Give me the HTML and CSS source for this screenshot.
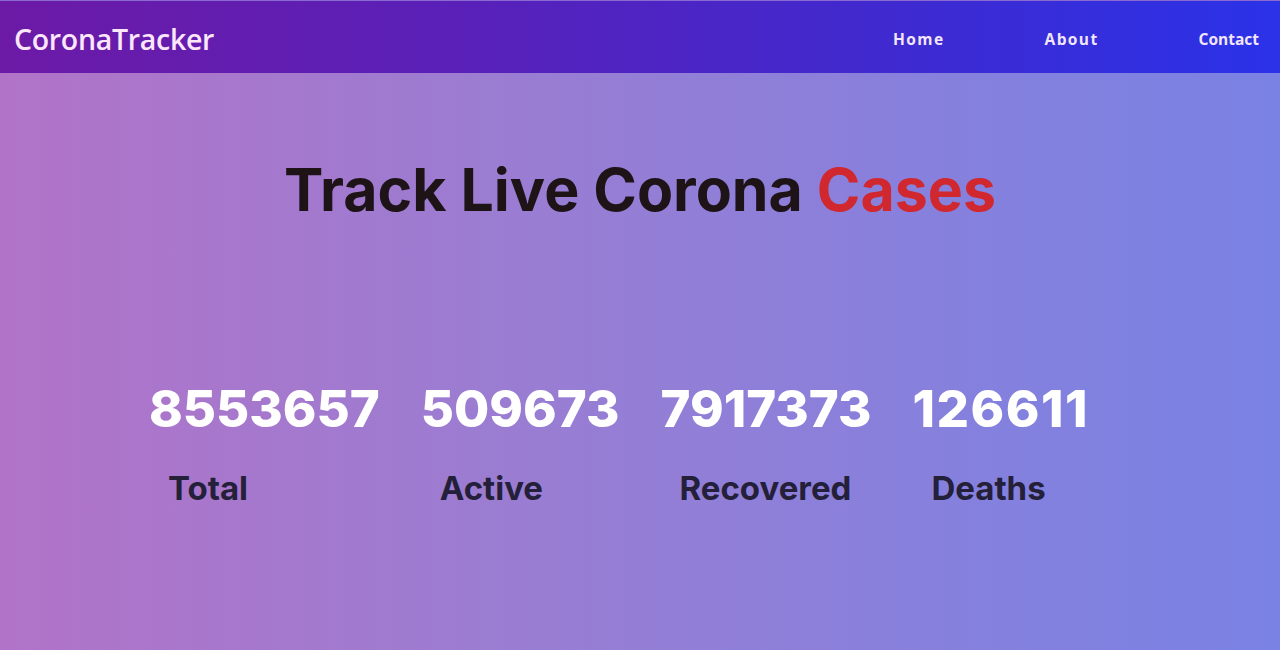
FILE: index.html
```html
<!DOCTYPE html>
<html lang="en">
<head>
<meta charset="utf-8">
<title>CoronaTracker</title>
<link rel="stylesheet" href="styles.css">
</head>
<body>
<header class="navbar">
  <div class="logo">CoronaTracker</div>
  <nav class="nav-links">
    <a class="nav-link spaced" href="#">Home</a>
    <a class="nav-link spaced" href="#">About</a>
    <a class="nav-link" href="#">Contact</a>
  </nav>
</header>
<main class="hero">
  <h1 class="title">Track Live Corona <span class="accent">Cases</span></h1>
  <section class="stats">
    <div class="stat">
      <div class="stat-num">8553657</div>
      <div class="stat-label">Total</div>
    </div>
    <div class="stat">
      <div class="stat-num">509673</div>
      <div class="stat-label">Active</div>
    </div>
    <div class="stat">
      <div class="stat-num">7917373</div>
      <div class="stat-label">Recovered</div>
    </div>
    <div class="stat">
      <div class="stat-num deaths-num">126611</div>
      <div class="stat-label">Deaths</div>
    </div>
  </section>
</main>
</body>
</html>
```
FILE: styles.css
```css
* { box-sizing: border-box; }
html, body { margin: 0; padding: 0; }
body {
  width: 1280px;
  height: 650px;
  overflow: hidden;
  font-family: Inter, "Liberation Sans", sans-serif;
  background: linear-gradient(90deg, #b173c8 0%, #9a7dd2 40%, #8880dc 70%, #7a82e3 100%);
}
.navbar {
  height: 73px;
  display: flex;
  align-items: center;
  justify-content: space-between;
  padding: 3px 21px 0 14px;
  background: linear-gradient(90deg, #6c1aa6 0%, #5a20b8 35%, #3f2ad0 70%, #2b32e8 100%);
  border-top: 1px solid #8a6ad0;
}
.logo {
  font-family: "Open Sans", sans-serif;
  font-weight: 600;
  font-size: 28.5px;
  color: #fbe6fa;
  letter-spacing: -0.3px;
}
.nav-links {
  display: flex;
  align-items: center;
  gap: 100px;
}
.nav-link {
  color: #f3e6fb;
  text-decoration: none;
  font-family: "Open Sans", sans-serif;
  font-weight: 700;
  font-size: 15.5px;
}
.nav-link.spaced { letter-spacing: 1.4px; }
.hero {
  display: flex;
  flex-direction: column;
  align-items: center;
}
.title {
  margin: 81px 0 0;
  font-size: 59px;
  font-weight: 700;
  color: #1e1418;
  letter-spacing: 0;
}
.accent { color: #d0282e; }
.stats {
  display: flex;
  margin-top: 158px;
  padding-right: 42px;
}
.stat {
  margin-left: 41px;
  display: flex;
  flex-direction: column;
}
.stat:first-child { margin-left: 0; }
.stat-num {
  font-size: 51px;
  font-weight: 800;
  color: #ffffff;
  line-height: 1;
  letter-spacing: 0;
}
.deaths-num { letter-spacing: 1.5px; }
.stat-label {
  margin-top: 38px;
  padding-left: 19px;
  font-size: 33px;
  font-weight: 700;
  color: #24203a;
  line-height: 1;
}
```
